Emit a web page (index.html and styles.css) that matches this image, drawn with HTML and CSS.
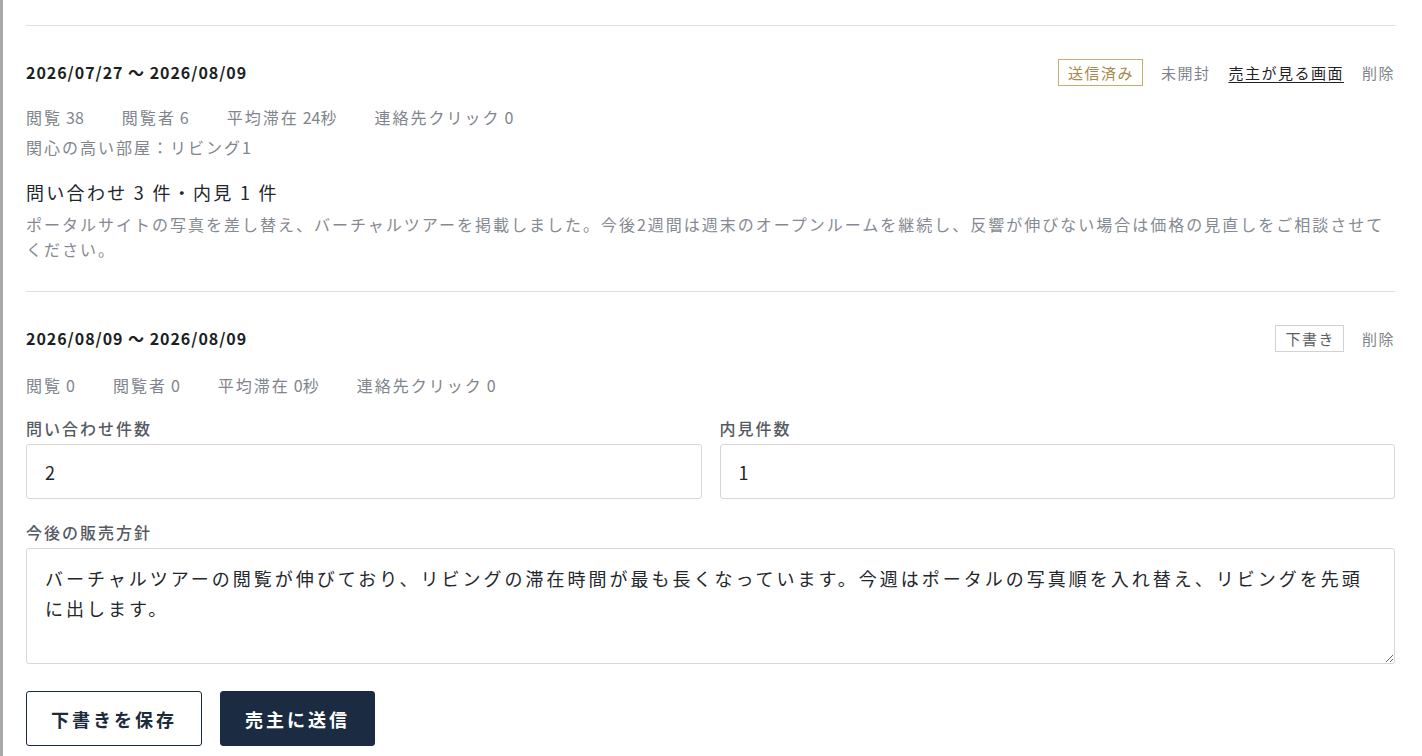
FILE: index.html
```html
<!DOCTYPE html>
<html lang="ja">
<head>
<meta charset="utf-8">
<title>販売報告</title>
<link rel="stylesheet" href="styles.css">
</head>
<body>
<div class="backdrop">
  <div class="panel">
    <section class="entry">
      <div class="head">
        <div class="period">2026/07/27 〜 2026/08/09</div>
        <div class="actions">
          <span class="badge sent">送信済み</span>
          <span class="muted">未開封</span>
          <a class="link" href="#">売主が見る画面</a>
          <span class="muted">削除</span>
        </div>
      </div>
      <div class="stats">
        <span class="stat">閲覧<span class="n">38</span></span>
        <span class="stat">閲覧者<span class="n">6</span></span>
        <span class="stat">平均滞在<span class="n">24秒</span></span>
        <span class="stat">連絡先クリック<span class="n">0</span></span>
      </div>
      <div class="interest">関心の高い部屋：リビング1</div>
      <div class="result">問い合わせ 3 件・内見 1 件</div>
      <p class="note">ポータルサイトの写真を差し替え、バーチャルツアーを掲載しました。今後2週間は週末のオープンルームを継続し、反響が伸びない場合は価格の見直しをご相談させてください。</p>
    </section>

    <section class="entry">
      <div class="head">
        <div class="period">2026/08/09 〜 2026/08/09</div>
        <div class="actions">
          <span class="badge draft">下書き</span>
          <span class="muted">削除</span>
        </div>
      </div>
      <div class="stats">
        <span class="stat">閲覧<span class="n">0</span></span>
        <span class="stat">閲覧者<span class="n">0</span></span>
        <span class="stat">平均滞在<span class="n">0秒</span></span>
        <span class="stat">連絡先クリック<span class="n">0</span></span>
      </div>
      <div class="fields">
        <label class="field">
          <span class="label">問い合わせ件数</span>
          <input class="input" type="text" value="2">
        </label>
        <label class="field">
          <span class="label">内見件数</span>
          <input class="input" type="text" value="1">
        </label>
      </div>
      <label class="field policy">
        <span class="label">今後の販売方針</span>
        <textarea class="textarea">バーチャルツアーの閲覧が伸びており、リビングの滞在時間が最も長くなっています。今週はポータルの写真順を入れ替え、リビングを先頭に出します。</textarea>
      </label>
      <div class="buttons">
        <button class="btn outline" type="button">下書きを保存</button>
        <button class="btn primary" type="button">売主に送信</button>
      </div>
    </section>
  </div>
</div>
</body>
</html>
```

FILE: styles.css
```css
* { box-sizing: border-box; }

html, body {
  margin: 0;
  height: 756px;
  overflow: hidden;
}

body {
  font-family: "Noto Sans CJK JP", "Noto Sans", sans-serif;
  background: #a9a9a9;
  color: #1f2328;
}

.backdrop {
  height: 100%;
  padding-left: 3px;
}

.panel {
  background: #ffffff;
  height: 100%;
  padding: 25px 27px 0 23px;
}

.entry {
  border-top: 1px solid #dedede;
  padding: 32px 0 29px;
}

.head {
  display: flex;
  justify-content: space-between;
  align-items: center;
  height: 28px;
}

.period {
  font-size: 16px;
  font-weight: 700;
  letter-spacing: 0.06em;
  color: #1c1f24;
}

.actions {
  display: flex;
  align-items: center;
  gap: 18px;
  font-size: 15px;
  letter-spacing: 0.1em;
}

.badge {
  display: inline-flex;
  align-items: center;
  height: 27px;
  padding: 0 8px 0 9px;
  border: 1px solid;
}

.badge.sent {
  color: #a8894d;
  border-color: #cbac6e;
}

.badge.draft {
  color: #5a5e64;
  border-color: #d2d2d2;
}

.muted { color: #80858c; }

.link {
  color: #1f2328;
  text-decoration: underline;
  text-underline-offset: 3px;
}

.stats {
  display: flex;
  gap: 38px;
  margin-top: 16px;
  font-size: 16px;
  line-height: 30px;
  letter-spacing: 2px;
  color: #80858d;
}

.entry + .entry .stats { margin-top: 18px; }

.stat .n {
  margin-left: 4px;
  letter-spacing: 0;
}

.interest {
  font-size: 16px;
  line-height: 30px;
  letter-spacing: 2px;
  color: #80858d;
}

.result {
  margin-top: 16px;
  font-size: 18px;
  line-height: 28px;
  letter-spacing: 2.3px;
  color: #23262b;
}

.note {
  margin: 6px 0 0;
  font-size: 16px;
  line-height: 25px;
  letter-spacing: 2px;
  color: #858a92;
}

.fields {
  display: grid;
  grid-template-columns: 1fr 1fr;
  gap: 18px;
  margin-top: 17px;
}

.field {
  display: flex;
  flex-direction: column;
}

.label {
  font-size: 16px;
  font-weight: 500;
  line-height: 22px;
  letter-spacing: 2px;
  color: #555a62;
  margin-bottom: 5px;
}

.input {
  height: 55px;
  padding: 0 18px;
  border: 1px solid #d6d6d6;
  border-radius: 3px;
  font-family: inherit;
  font-size: 18px;
  color: #23262b;
  background: #fff;
}

.policy { margin-top: 22px; }

.textarea {
  height: 116px;
  padding: 14px 18px;
  border: 1px solid #d6d6d6;
  border-radius: 3px;
  font-family: inherit;
  font-size: 18px;
  line-height: 30px;
  letter-spacing: 3px;
  color: #23262b;
  background: #fff;
  resize: both;
}

.buttons {
  display: flex;
  gap: 18px;
  margin-top: 27px;
}

.btn {
  height: 55px;
  padding: 0 24px;
  border-radius: 3px;
  font-family: inherit;
  font-size: 18px;
  font-weight: 700;
  letter-spacing: 3px;
}

.btn.outline {
  background: #fff;
  color: #1b2a3d;
  border: 1px solid #1b2a3d;
}

.btn.primary {
  background: #1b2b42;
  color: #fff;
  border: 1px solid #1b2b42;
}
```
